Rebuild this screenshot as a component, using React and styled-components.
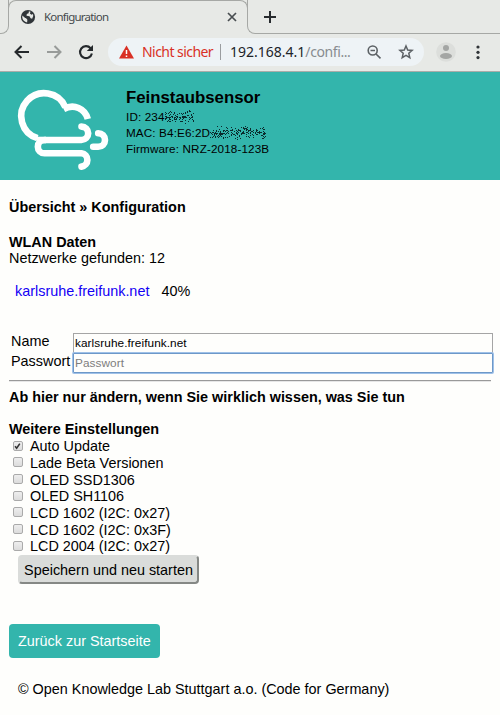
import React from "react";
import styled, { createGlobalStyle } from "styled-components";

const GlobalStyle = createGlobalStyle`
  *, *::before, *::after { box-sizing: border-box; }
  html, body { margin: 0; padding: 0; }
  body { background: #fefefc; overflow: hidden; }
`;

const Window = styled.div`
  width: 500px;
  height: 715px;
  overflow: hidden;
  display: flex;
  flex-direction: column;
  background: #fefefc;
  color: #000;
  font: 14.4px/16px "Liberation Sans", Arial, sans-serif;
`;

/* Browser chrome */
const TabStrip = styled.div`
  display: flex;
  flex: none;
  height: 34px;
  background: #e7e9e6;
`;
const StripStart = styled.div`
  width: 9px;
  flex: none;
  margin-right: -1px;
  border: solid #a6a8a5;
  border-width: 0 1px 1px 0;
  border-bottom-right-radius: 8px;
`;
const StripEnd = styled.div`
  flex: 1;
  margin-left: -1px;
  padding: 10px 0 0 16px;
  border: solid #a6a8a5;
  border-width: 0 0 1px 1px;
  border-bottom-left-radius: 8px;
`;
const Tab = styled.div`
  display: flex;
  align-items: center;
  width: 240px;
  height: 26px;
  padding: 7px 9px 0 11px;
  border: 1px solid #a6a8a5;
  border-bottom: 0;
  border-radius: 8px 8px 0 0;
  font: 12px/16px "Noto Sans", sans-serif;
  color: #45494c;
`;
const TabTitle = styled.span`
  flex: 1;
  margin-left: 8px;
  font-size: 11.5px;
  letter-spacing: -0.78px;
`;
const Toolbar = styled.div`
  display: flex;
  flex: none;
  align-items: center;
  height: 38px;
  padding: 0 0 1px 12px;
  background: #e7e9e6;
  border-bottom: 1px solid #aaaca9;
`;
const NavIcons = styled.div`
  display: flex;
  gap: 12px;
  margin-right: 12px;
`;
const AddressBar = styled.div`
  display: flex;
  align-items: center;
  width: 316px;
  height: 28px;
  padding-left: 11px;
  border-radius: 14px;
  background: #eef3f6;
  font: 14px/20px "Noto Sans", sans-serif;
  white-space: nowrap;
`;
const Warning = styled.span`
  width: 71px;
  margin-left: 8px;
  color: #d93025;
  letter-spacing: -0.55px;
`;
const Divider = styled.span`
  width: 1px;
  height: 16px;
  margin: 0 9px 0 7px;
  background: #9a9da0;
`;
const Address = styled.span`
  width: 130px;
  color: #202429;
`;
const Path = styled.span`
  color: #888c90;
  letter-spacing: -0.4px;
`;
const AddressIcons = styled.div`
  display: flex;
  gap: 12px;
  margin-left: 4px;
`;
const ProfileIcons = styled.div`
  display: flex;
  align-items: center;
  margin-left: 12px;
  gap: 19px;
`;

/* Sensor page */
const Header = styled.header`
  display: flex;
  flex: none;
  height: 108px;
  padding-left: 14px;
  background: #33b5ac;
`;
const SensorInfo = styled.div`
  margin: 16px 0 0 12px;
  font-size: 11.7px;
  letter-spacing: 0.13px;
  line-height: 16px;
  white-space: nowrap;
`;
const SensorName = styled.div`
  height: 21px;
  font-size: 16.8px;
  font-weight: bold;
  letter-spacing: 0;
  line-height: 20px;
`;
const InfoLine = styled.div`
  display: flex;
  height: 16px;
`;
const Content = styled.main`
  padding: 19px 7px 0 9px;
  display: flex;
  flex-direction: column;
  align-items: flex-start;
  white-space: nowrap;
`;
const Heading = styled.div`
  font-weight: bold;
  height: ${(p) => p.$height || 16}px;
`;
const TextLine = styled.div`
  height: 16px;
`;
const Network = styled.div`
  display: flex;
  gap: 12px;
  margin: 17px 0 0 6px;
  height: 50px;
`;
const Link = styled.a`
  color: #1400f5;
  text-decoration: none;
`;
const Form = styled.div`
  display: grid;
  grid-template-columns: 62px 420px;
  grid-template-rows: 20px 20px;
  padding-left: 2px;
`;
const Label = styled.label`
  line-height: 16px;
`;
const Input = styled.input`
  width: 420px;
  height: 20px;
  padding: 0 1px 1px;
  border: 1px solid ${(p) => (p.$active ? "#6d98c8" : "#a5a5a5")};
  box-shadow: ${(p) => (p.$active ? "0 0 0 1px #9fc1e8" : "none")};
  border-radius: ${(p) => (p.$active ? "1px" : 0)};
  outline: 0;
  background: #fefefc;
  color: #000;
  font: 11.8px/16px "Liberation Sans", Arial, sans-serif;
  letter-spacing: 0.07px;
  &::placeholder { color: #7d7d7d; opacity: 1; }
`;
const Rule = styled.div`
  width: 482px;
  height: 2px;
  margin: 7px 0 7px;
  border-top: 1px solid #999;
  border-bottom: 1px solid #e6e6e6;
`;
const Option = styled.label`
  display: flex;
  align-items: center;
  height: 16.67px;
  padding-left: 4px;
  gap: 7px;
`;
const Box = styled.span`
  width: 10px;
  height: 10px;
  margin-top: -1px;
  border: 1px solid #aaa;
  border-radius: 2px;
  background: linear-gradient(#eee, #dcdcdc);
  display: flex;
`;
const SaveButton = styled.button`
  width: 181px;
  height: 29px;
  margin: 0 0 0 9px;
  padding: 1px 0 0;
  border: 2px solid #dadcda;
  border-right-color: #858885;
  border-bottom-color: #858885;
  border-radius: 4px;
  background: #dadcda;
  color: #000;
  font: 14.4px/20px "Liberation Sans", Arial, sans-serif;
`;
const BackButton = styled.a`
  width: 151px;
  height: 34px;
  margin-top: 40px;
  padding-left: 9px;
  border-radius: 4px;
  background: #33b5ac;
  color: #fff;
  line-height: 34px;
`;
const Footer = styled.footer`
  margin: 23px 0 0 9px;
`;

const Globe = () => (
  <svg width="16" height="16" viewBox="0 0 16 16">
    <circle cx="8" cy="8" r="7.1" fill="#303539" />
    <path d="M2.3 6.6L5.2 9.1 6.1 9.3 7.4 10.8 7.1 13.5Q3 12.6 2.3 8.8ZM8.9 2.3L8.6 4.2 6.8 5.1 6.5 6.8 9.5 7.2 10.6 9.3 12.1 9.7Q14 7.6 13 5.1L11.5 5.8 9.9 4.6 10.5 2.7Z" fill="#e7e9e6" />
  </svg>
);
const Cross = () => (
  <svg width="12" height="12" viewBox="0 0 12 12" stroke="#484d50" strokeWidth="1.7">
    <path d="M2 2L10 10M10 2L2 10" />
  </svg>
);
const Plus = () => (
  <svg width="12" height="14" viewBox="0 0 12 14" stroke="#272b2e" strokeWidth="2">
    <path d="M0 7H12M6 1V13" />
  </svg>
);
const Arrow = ({ forward }) => (
  <svg width="20" height="20" viewBox="0 0 20 20" fill="none" stroke={forward ? "#989b99" : "#25292c"} strokeWidth="2">
    <path d={forward ? "M3 10H16M10.5 4L16.5 10L10.5 16" : "M17 10H4M9.5 4L3.5 10L9.5 16"} />
  </svg>
);
const Reload = () => (
  <svg width="20" height="20" viewBox="0 0 20 20">
    <path d="M14.6 6.2A6 6 0 1 0 15.9 11.5" fill="none" stroke="#25292c" strokeWidth="2.1" />
    <path d="M17 3V9H10.8Z" fill="#25292c" />
  </svg>
);
const Alert = () => (
  <svg width="15" height="14" viewBox="0 0 15 14">
    <path d="M7.5 0.5L15 13.5H0Z" fill="#d93025" />
    <path d="M7.5 5V9M7.5 10.4V12" stroke="#fff" strokeWidth="1.5" />
  </svg>
);
const ZoomOut = () => (
  <svg width="20" height="20" viewBox="0 0 20 20" fill="none" stroke="#5c6165" strokeWidth="1.6">
    <circle cx="8.7" cy="8.5" r="4.5" />
    <path d="M6.5 8.5H11M12 12L16.5 16.3" />
  </svg>
);
const Star = () => (
  <svg width="20" height="20" viewBox="0 0 20 20" fill="none" stroke="#5c6165" strokeWidth="1.5">
    <path d="M10 4L11.7 8.1L16.1 8.4L12.8 11.3L13.8 15.6L10 13.3L6.2 15.6L7.2 11.3L3.9 8.4L8.3 8.1Z" />
  </svg>
);
const Profile = () => (
  <svg width="20" height="20" viewBox="0 0 20 20">
    <circle cx="10" cy="10" r="9.8" fill="#dcdedb" />
    <circle cx="10" cy="6" r="3" fill="#a4a6a4" />
    <ellipse cx="10" cy="14" rx="6" ry="3" fill="#a4a6a4" />
  </svg>
);
const Dots = () => (
  <svg width="6" height="16" viewBox="0 0 6 16" fill="#303437">
    <circle cx="3" cy="3" r="1.6" />
    <circle cx="3" cy="8.3" r="1.6" />
    <circle cx="3" cy="13.6" r="1.6" />
  </svg>
);
const Cloud = () => (
  <svg width="100" height="108" viewBox="14 72 100 108" fill="none" stroke="#fff" strokeWidth="6.6" strokeLinecap="round">
    <path d="M65.4 107.2A23 23 0 1 0 37.5 138.2" strokeLinecap="butt" />
    <path d="M63.6 109C74 103.5 85 108.5 87.8 119" strokeLinecap="butt" />
    <path d="M81.5 126.6A6.7 6.7 0 0 1 81.5 140H44.5A6.65 6.65 0 0 0 44.5 153.3H81.5A6.7 6.7 0 0 1 81.5 166.6" />
    <path d="M37 140H46" strokeLinecap="butt" />
    <path d="M98.2 133.2A6.8 6.8 0 0 1 98.2 146.8H93.2" />
  </svg>
);
const Check = () => (
  <svg width="10" height="10" viewBox="0 0 10 10">
    <path d="M1.3 4.2L3.3 6.6L7.3 0.8" fill="none" stroke="#333" strokeWidth="2" />
  </svg>
);

/* Speckle that hides the tail of an identifier */
const speckle = (width, seed) => {
  let s = seed;
  const rnd = () => (s = (s * 16807) % 2147483647) / 2147483647;
  let d = "";
  for (let i = 0; i < width * 3.8; i++) {
    const x = Math.floor(rnd() * width);
    const y = Math.floor(((rnd() + rnd()) / 2) * 14);
    d += `M${x} ${y}h1v1h-1z`;
  }
  return d;
};
const Speckle = ({ width, seed }) => (
  <svg width={width} height="16" viewBox={`0 -1 ${width} 16`} fill="#0b2b2d" shapeRendering="crispEdges">
    <path d={speckle(width, seed)} />
  </svg>
);

const options = [
  "Auto Update",
  "Lade Beta Versionen",
  "OLED SSD1306",
  "OLED SH1106",
  "LCD 1602 (I2C: 0x27)",
  "LCD 1602 (I2C: 0x3F)",
  "LCD 2004 (I2C: 0x27)",
];

export default function App() {
  return (
    <Window>
      <GlobalStyle />
      <TabStrip>
        <StripStart />
        <Tab>
          <Globe />
          <TabTitle>Konfiguration</TabTitle>
          <Cross />
        </Tab>
        <StripEnd><Plus /></StripEnd>
      </TabStrip>
      <Toolbar>
        <NavIcons><Arrow /><Arrow forward /><Reload /></NavIcons>
        <AddressBar>
          <Alert />
          <Warning>Nicht sicher</Warning>
          <Divider />
          <Address>192.168.4.1<Path>/confi...</Path></Address>
          <AddressIcons><ZoomOut /><Star /></AddressIcons>
        </AddressBar>
        <ProfileIcons><Profile /><Dots /></ProfileIcons>
      </Toolbar>
      <Header>
        <Cloud />
        <SensorInfo>
          <SensorName>Feinstaubsensor</SensorName>
          <InfoLine>ID: 234<Speckle width={29} seed={771} /></InfoLine>
          <InfoLine>MAC: B4:E6:2D<Speckle width={56} seed={9241} /></InfoLine>
          <InfoLine>Firmware: NRZ-2018-123B</InfoLine>
        </SensorInfo>
      </Header>
      <Content>
        <Heading $height={35}>Übersicht » Konfiguration</Heading>
        <Heading>WLAN Daten</Heading>
        <TextLine>Netzwerke gefunden: 12</TextLine>
        <Network><Link>karlsruhe.freifunk.net</Link><span>40%</span></Network>
        <Form>
          <Label>Name</Label>
          <Input readOnly value="karlsruhe.freifunk.net" />
          <Label>Passwort</Label>
          <Input $active placeholder="Passwort" />
        </Form>
        <Rule />
        <Heading $height={32}>Ab hier nur ändern, wenn Sie wirklich wissen, was Sie tun</Heading>
        <Heading $height={17}>Weitere Einstellungen</Heading>
        {options.map((text, i) => (
          <Option key={text}><Box>{i === 0 && <Check />}</Box>{text}</Option>
        ))}
        <SaveButton>Speichern und neu starten</SaveButton>
        <BackButton>Zurück zur Startseite</BackButton>
        <Footer>© Open Knowledge Lab Stuttgart a.o. (Code for Germany)</Footer>
      </Content>
    </Window>
  );
}
